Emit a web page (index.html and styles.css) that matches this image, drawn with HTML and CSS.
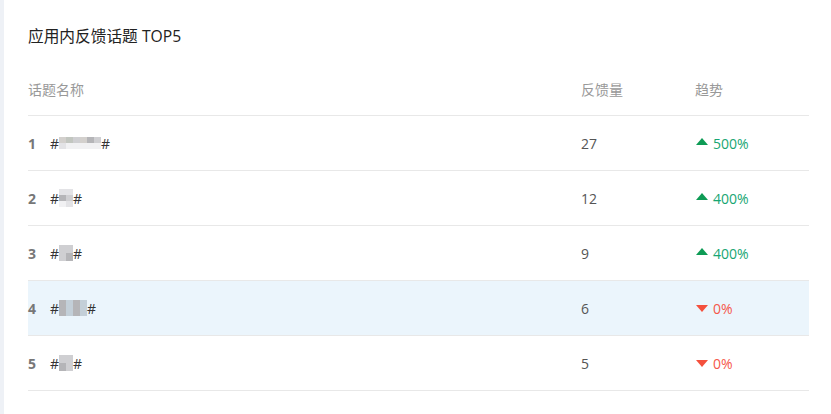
FILE: index.html
```html
<!DOCTYPE html>
<html lang="zh">
<head>
<meta charset="utf-8">
<link rel="stylesheet" href="styles.css">
</head>
<body>
<div class="page">
  <div class="strip"></div>
  <div class="panel">
    <h2 class="title">应用内反馈话题 TOP5</h2>
    <div class="table">
      <div class="row head">
        <div class="c1">话题名称</div>
        <div class="c2">反馈量</div>
        <div class="c3">趋势</div>
      </div>
      <div class="row">
        <div class="c1"><span class="rank">1</span><span class="hash">#</span><span class="blur w6"><i class="a"></i><i class="b"></i><i class="c"></i><i class="a"></i><i class="d"></i><i class="c"></i><i class="e"></i><i class="f"></i><i class="f"></i><i class="f"></i><i class="f"></i><i class="f"></i></span><span class="hash">#</span></div>
        <div class="c2">27</div>
        <div class="c3 up"><span class="tri"></span>500%</div>
      </div>
      <div class="row">
        <div class="c1"><span class="rank">2</span><span class="hash">#</span><span class="blur w2"><i class="e"></i><i class="e"></i><i class="d"></i><i class="c"></i><i class="f"></i><i class="e"></i></span><span class="hash">#</span></div>
        <div class="c2">12</div>
        <div class="c3 up"><span class="tri"></span>400%</div>
      </div>
      <div class="row">
        <div class="c1"><span class="rank">3</span><span class="hash">#</span><span class="blur w2 short"><i class="c"></i><i class="c"></i><i class="c"></i><i class="d"></i></span><span class="hash">#</span></div>
        <div class="c2">9</div>
        <div class="c3 up"><span class="tri"></span>400%</div>
      </div>
      <div class="row hl">
        <div class="c1"><span class="rank">4</span><span class="hash">#</span><span class="blur w4 short"><i class="d"></i><i class="g"></i><i class="d"></i><i class="g"></i><i class="d"></i><i class="g"></i><i class="d"></i><i class="g"></i></span><span class="hash">#</span></div>
        <div class="c2">6</div>
        <div class="c3 down"><span class="tri"></span>0%</div>
      </div>
      <div class="row">
        <div class="c1"><span class="rank">5</span><span class="hash">#</span><span class="blur w2 short"><i class="c"></i><i class="c"></i><i class="d"></i><i class="c"></i></span><span class="hash">#</span></div>
        <div class="c2">5</div>
        <div class="c3 down"><span class="tri"></span>0%</div>
      </div>
    </div>
  </div>
</div>
</body>
</html>
```
FILE: styles.css
```css
* { box-sizing: border-box; }
html, body { margin: 0; padding: 0; background: #fff; }
body {
  font-family: "Open Sans", "Noto Sans CJK SC", sans-serif;
  font-size: 14px;
  color: #555;
}
.page { display: flex; width: 831px; height: 414px; }
.strip { width: 4px; background: #eef1f6; flex: none; }
.panel { flex: 1; padding: 24px 22px 0 24px; }
.title {
  margin: 0;
  font-size: 15.7px;
  line-height: 24px;
  font-weight: normal;
  color: #222;
}
.table { margin-top: 13px; }
.row {
  display: flex;
  align-items: center;
  height: 55px;
  border-bottom: 1px solid #e8e8e8;
}
.row.hl { background: #ebf5fc; }
.row.head { color: #999; padding-top: 2px; }
.c1 { width: 553px; display: flex; align-items: center; }
.c2 { width: 114px; }
.c3 { flex: 1; display: flex; align-items: center; }
.rank { width: 22px; font-weight: bold; color: #777; }
.hash { color: #333; }
.blur {
  display: grid;
  grid-template-columns: repeat(6, 7px);
  grid-auto-rows: 6px;
  margin: 0;
}
.blur.w2 { grid-template-columns: repeat(2, 7px); }
.blur.w4 { grid-template-columns: repeat(4, 7px); }
.blur.short { grid-auto-rows: 8px; }
.blur i { display: block; }
.blur .a { background: #d3d0cd; }
.blur .b { background: #c2c6c0; }
.blur .c { background: #cfcfd2; }
.blur .d { background: #b5b5b8; }
.blur .e { background: #e3e3e6; }
.blur .f { background: #f1f1f3; }
.blur .g { background: #c3cfd8; }
.tri {
  width: 0; height: 0;
  border-left: 6px solid transparent;
  border-right: 6px solid transparent;
  margin-right: 5px;
  margin-left: 1px;
}
.up { color: #17a673; }
.up .tri { border-bottom: 7px solid #0e9b55; margin-top: -4px; }
.down { color: #f5574a; }
.down .tri { border-top: 7px solid #f4503d; margin-top: 1px; }
```
